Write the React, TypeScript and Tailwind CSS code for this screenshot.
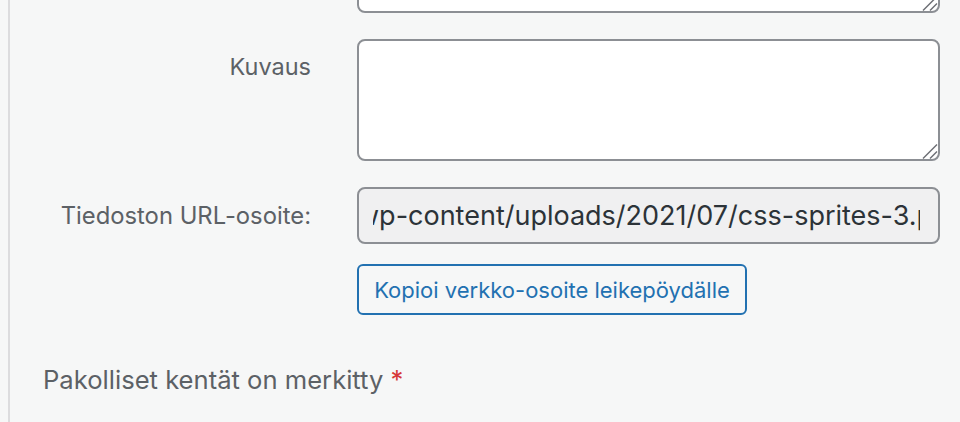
function ResizeHandle() {
  return (
    <svg
      className="pointer-events-none absolute bottom-0 right-0"
      width="16"
      height="16"
      viewBox="0 0 16 16"
      fill="none"
    >
      <path d="M1 15.5 L15 1.5" stroke="#6b6e73" strokeWidth="1.4" />
      <path d="M8 15.5 L15 8.5" stroke="#6b6e73" strokeWidth="1.4" />
    </svg>
  );
}

export default function App() {
  return (
    <main
      className="h-[422px] w-[960px] overflow-hidden bg-[#f6f7f7] pl-2"
      style={{ fontFamily: "Inter, 'Liberation Sans', sans-serif" }}
    >
      <div className="h-full border-l-2 border-[#dcdcde]">
        {/* previous textarea, mostly scrolled out of view */}
        <div className="flex h-[13px] items-end overflow-hidden">
          <div className="w-[301px] shrink-0" />
          <div className="relative ml-[46px] h-[60px] w-[583px] shrink-0 rounded-[8px] border-2 border-[#8c8f94] bg-white">
            <ResizeHandle />
          </div>
        </div>

        <div className="mt-[26px] flex">
          <label className="w-[301px] shrink-0 pt-[12px] text-right text-[23.5px] leading-[32px] text-[#5c6166]">
            Kuvaus
          </label>
          <div className="relative ml-[46px] h-[122px] w-[583px] shrink-0 rounded-[8px] border-2 border-[#8c8f94] bg-white">
            <ResizeHandle />
          </div>
        </div>

        <div className="mt-[26px] flex items-center">
          <label className="w-[301px] shrink-0 text-right text-[23.8px] leading-[32px] text-[#5c6166]">
            Tiedoston URL-osoite:
          </label>
          <div className="ml-[46px] flex h-[57px] w-[583px] shrink-0 items-center rounded-[8px] border-2 border-[#8c8f94] bg-[#f0f0f1] pl-[14px] pr-[18px]">
            <div className="w-full overflow-hidden whitespace-nowrap text-[27px] leading-[36px] text-[#2c3338]">
              <span className="-ml-[16px]">
                wp-content/uploads/2021/07/css-sprites-3.png
              </span>
            </div>
          </div>
        </div>

        <div className="mt-[20px] flex">
          <div className="w-[301px] shrink-0" />
          <button className="ml-[46px] flex h-[51px] w-[390px] shrink-0 items-center justify-center rounded-[6px] border-2 border-[#2271b1] bg-[#f6f7f7] text-[22px] leading-[30px] text-[#2271b1]">
            Kopioi verkko-osoite leikepöydälle
          </button>
        </div>

        <p className="mt-[49px] pl-[33px] text-[25.6px] leading-[32px] text-[#5c6166]">
          Pakolliset kentät on merkitty{" "}
          <span className="text-[#d63638]">*</span>
        </p>
      </div>
    </main>
  );
}
